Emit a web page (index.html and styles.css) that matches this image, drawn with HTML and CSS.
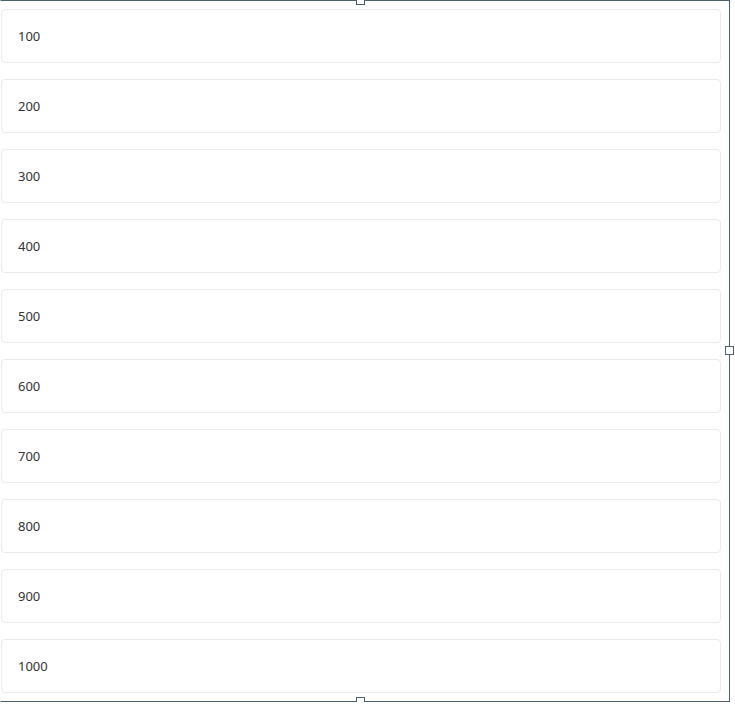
FILE: index.html
```html
<!DOCTYPE html>
<html lang="en">
<head>
    <meta charset="UTF-8">
    <title>List</title>
    <link rel="stylesheet" href="styles.css">
</head>
<body>
    <div class="frame">
        <div class="list">
            <div class="item">100</div>
            <div class="item">200</div>
            <div class="item">300</div>
            <div class="item">400</div>
            <div class="item">500</div>
            <div class="item">600</div>
            <div class="item">700</div>
            <div class="item">800</div>
            <div class="item">900</div>
            <div class="item">1000</div>
        </div>
        <span class="handle handle-top"></span>
        <span class="handle handle-right"></span>
        <span class="handle handle-bottom"></span>
    </div>
</body>
</html>
```

FILE: styles.css
```css
body {
    margin: 0;
    background: #fff;
    font-family: 'Noto Sans', 'Open Sans', sans-serif;
    overflow: hidden;
}

.frame {
    position: relative;
    width: 728px;
    height: 700px;
    border: 1px solid #4d616c;
    border-left-color: transparent;
}

.list {
    display: flex;
    flex-direction: column;
    gap: 16px;
    padding: 8px 8px 8px 0;
}

.item {
    border: 1px solid #ebebeb;
    border-radius: 4px;
    padding: 16px;
    height: 20px;
    line-height: 20px;
    font-size: 13px;
    color: #333;
}

.handle {
    position: absolute;
    width: 7px;
    height: 7px;
    background: #fff;
    border: 1px solid #4d616c;
}
.handle-top { top: -5px; left: 355px; }
.handle-bottom { bottom: -5px; left: 355px; }
.handle-right { right: -5px; top: 345px; }
```
